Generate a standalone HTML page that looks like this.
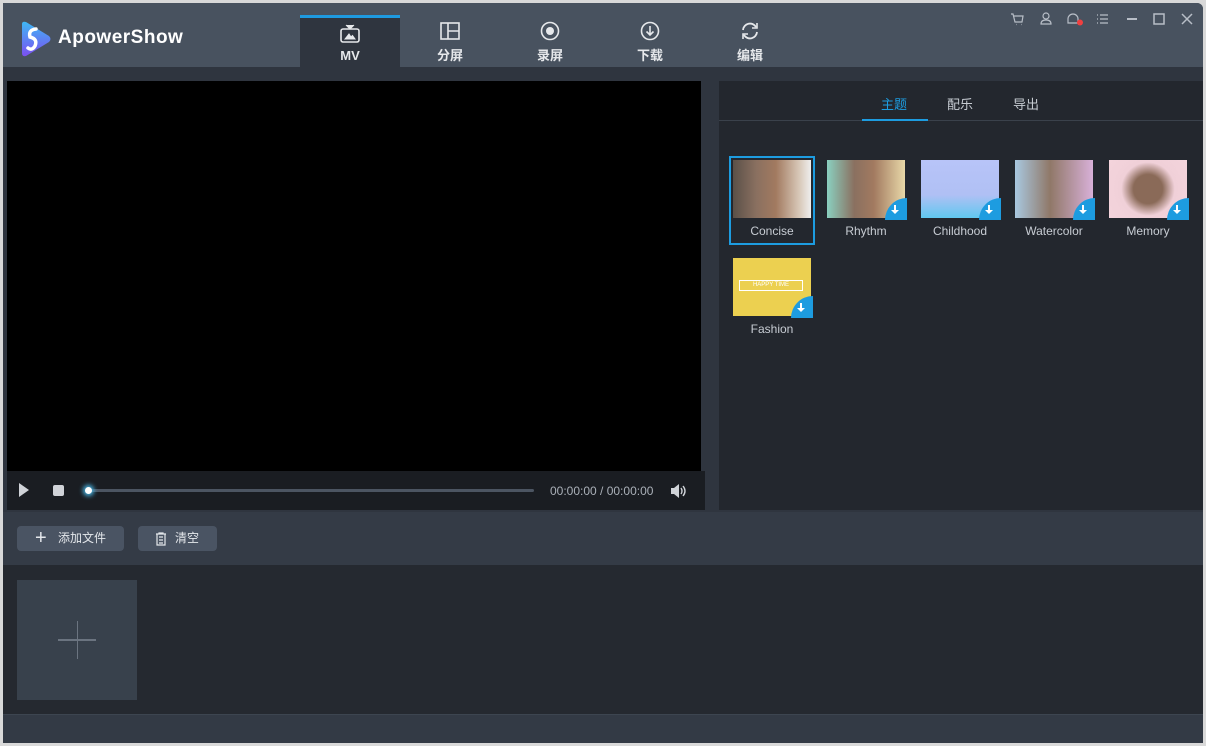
<!DOCTYPE html>
<html><head><meta charset="utf-8"><style>
*{margin:0;padding:0;box-sizing:border-box}
body{width:1206px;height:746px;background:#d9d9d9;font-family:"Liberation Sans","Noto Sans CJK SC",sans-serif;position:relative;overflow:hidden}
.a{position:absolute}
.win{left:3px;top:3px;width:1200px;height:740px;background:#2f353f;overflow:hidden;border-radius:0 6px 0 0}
.tab{position:absolute;top:12px;width:100px;height:52px;text-align:center;color:#e6e8eb;font-size:13px;font-weight:bold}
.tab svg{display:block;margin:6px auto 4px}
.th{position:absolute;width:78px;height:58px}
.lab{position:absolute;width:94px;text-align:center;color:#c7ccd3;font-size:12px}
.dl{position:absolute;right:-2px;bottom:-2px;width:22px;height:22px;background:#1d9ce0;border-radius:22px 0 0 0}
.dl:after{content:"";position:absolute;left:9px;top:7px;width:2px;height:6px;background:#fff}
.dl:before{content:"";position:absolute;left:6px;top:12px;border:4px solid transparent;border-top:4px solid #fff}
.btn{position:absolute;top:523px;height:25px;background:#4a5463;border-radius:4px;color:#e4e7eb;font-size:12px;line-height:25px}
</style></head><body>
<div class="a win">
 <div class="a" style="left:0;top:0;width:1200px;height:64px;background:#48525f"></div>
 <svg class="a" style="left:15px;top:18px" width="34" height="36" viewBox="0 0 34 36"><defs><linearGradient id="g" x1="0" y1="0" x2="0" y2="1"><stop offset="0" stop-color="#3fb8f5"/><stop offset="1" stop-color="#7b4ff0"/></linearGradient></defs><path d="M4 3 Q4 0 8 1 L31 15 Q34 18 31 21 L8 35 Q4 36 4 32Z" fill="url(#g)"/><path d="M18 8 Q10 9 12 16 Q20 18 17 25 Q14 30 10 27" stroke="#fff" stroke-width="3.5" fill="none" stroke-linecap="round"/></svg>
 <div class="a" style="left:55px;top:24px;color:#fff;font-size:19px;font-weight:bold;letter-spacing:0.5px">ApowerShow</div>
 <div class="tab" style="left:297px;background:#2f353f;border-top:3px solid #1e9ae0"><svg width="22" height="20" viewBox="0 0 22 20"><rect x="2" y="5" width="18" height="13" rx="2" fill="none" stroke="#e6e8eb" stroke-width="1.6"/><path d="M7 1l4 4 4-4M6 15l4-5 2 3 1.5-1.5L16 15z" stroke="#e6e8eb" fill="#e6e8eb" stroke-width="1"/></svg>MV</div>
 <div class="tab" style="left:397px"><svg width="22" height="20" viewBox="0 0 22 20"><rect x="2" y="2" width="18" height="16" fill="none" stroke="#e6e8eb" stroke-width="1.6"/><path d="M9 2v16M9 10h11" stroke="#e6e8eb" stroke-width="1.6"/></svg>分屏</div>
 <div class="tab" style="left:497px"><svg width="22" height="20" viewBox="0 0 22 20"><circle cx="11" cy="10" r="8.5" fill="none" stroke="#e6e8eb" stroke-width="1.6"/><circle cx="11" cy="10" r="4" fill="#e6e8eb"/></svg>录屏</div>
 <div class="tab" style="left:597px"><svg width="22" height="20" viewBox="0 0 22 20"><circle cx="11" cy="10" r="8.5" fill="none" stroke="#e6e8eb" stroke-width="1.6"/><path d="M11 5v9M7.5 10.5L11 14l3.5-3.5" stroke="#e6e8eb" stroke-width="1.6" fill="none"/></svg>下载</div>
 <div class="tab" style="left:697px"><svg width="22" height="20" viewBox="0 0 22 20"><path d="M4 9a7 7 0 0 1 13-3M18 11a7 7 0 0 1-13 3" stroke="#e6e8eb" stroke-width="1.8" fill="none"/><path d="M18 2v5h-5M4 18v-5h5" fill="none" stroke="#e6e8eb" stroke-width="1.6"/></svg>编辑</div>
 <svg class="a" style="left:1005px;top:8px" width="195" height="16" viewBox="0 0 195 16" fill="none" stroke="#b8bec7" stroke-width="1.2"><path d="M3 3h2l2 8h7l1-6H6M8 13.5h.5M13 13.5h.5"/><circle cx="38" cy="5" r="3"/><path d="M33 13q0-4 5-4t5 4z"/><path d="M60 12v-4a5 5 0 0 1 10 0v4z"/><circle cx="72" cy="11.5" r="3" fill="#f04040" stroke="none"/><path d="M89 4h1M89 8h1M89 12h1M92 4h8M92 8h8M92 12h8"/><path d="M119 8h10" stroke-width="2"/><rect x="146" y="3" width="10" height="10" stroke-width="1.5"/><path d="M174 3l10 10M184 3l-10 10" stroke-width="1.5"/></svg>

 <div class="a" style="left:4px;top:78px;width:694px;height:390px;background:#000"></div>
 <div class="a" style="left:4px;top:468px;width:698px;height:39px;background:#1a1d22"></div>
 <div class="a" style="left:16px;top:480px;border-left:10px solid #d0d3d8;border-top:7px solid transparent;border-bottom:7px solid transparent"></div>
 <div class="a" style="left:50px;top:482px;width:11px;height:11px;background:#d0d3d8;border-radius:2px"></div>
 <div class="a" style="left:86px;top:486px;width:445px;height:3px;background:#4c5562;border-radius:2px"></div>
 <div class="a" style="left:82px;top:484px;width:7px;height:7px;background:#fff;border-radius:50%;box-shadow:0 0 5px 2px #4ab8e8"></div>
 <div class="a" style="left:547px;top:481px;color:#aab0b8;font-size:12px">00:00:00 / 00:00:00</div>
 <svg class="a" style="left:667px;top:480px" width="18" height="16" viewBox="0 0 18 16"><path d="M1 5h3l5-4v14l-5-4H1z" fill="#d0d3d8"/><path d="M11 5q2 3 0 6M13 3q4 5 0 10" stroke="#d0d3d8" stroke-width="1.4" fill="none"/></svg>

 <div class="a" style="left:716px;top:78px;width:484px;height:429px;background:#23272e"></div>
 <div class="a" style="left:716px;top:117px;width:484px;height:1px;background:#3a414b"></div>
 <div class="a" style="left:859px;top:116px;width:66px;height:2px;background:#1d9ce0"></div>
 <div class="a" style="left:878px;top:91px;color:#1d9ce0;font-size:13px">主题</div>
 <div class="a" style="left:944px;top:91px;color:#c7ccd3;font-size:13px">配乐</div>
 <div class="a" style="left:1010px;top:91px;color:#c7ccd3;font-size:13px">导出</div>

 <div class="a" style="left:726px;top:153px;width:86px;height:89px;border:2px solid #1d9ce0"></div>
 <div class="th" style="left:730px;top:157px;background:linear-gradient(90deg,#5a5048,#8a7060 30%,#a27a60 55%,#d8c8b8 85%,#eee)"></div>
 <div class="th" style="left:824px;top:157px;background:linear-gradient(90deg,#8ad0c0,#8a7060 35%,#a27a60 60%,#e8d8a8)"><div class="dl"></div></div>
 <div class="th" style="left:918px;top:157px;background:linear-gradient(180deg,#b8c4f8,#b0c0f4 60%,#60c8f0)"><div class="dl"></div></div>
 <div class="th" style="left:1012px;top:157px;background:linear-gradient(90deg,#a8c8e0,#907868 45%,#d8b0d8)"><div class="dl"></div></div>
 <div class="th" style="left:1106px;top:157px;background:radial-gradient(circle at 50% 50%,#8a6a58 30%,#f0d0d8 55%,#f4d4dc)"><div class="dl"></div></div>
 <div class="th" style="left:730px;top:255px;background:#ecd050"><div class="a" style="left:6px;top:22px;width:64px;height:11px;border:1px solid #fff;color:#fff;font-size:6px;text-align:center;line-height:9px">HAPPY TIME</div><div class="dl"></div></div>
 <div class="lab" style="left:722px;top:221px">Concise</div>
 <div class="lab" style="left:816px;top:221px">Rhythm</div>
 <div class="lab" style="left:910px;top:221px">Childhood</div>
 <div class="lab" style="left:1004px;top:221px">Watercolor</div>
 <div class="lab" style="left:1098px;top:221px">Memory</div>
 <div class="lab" style="left:722px;top:319px">Fashion</div>

 <div class="a" style="left:0;top:509px;width:1200px;height:53px;background:#343b46"></div>
 <div class="btn" style="left:14px;width:107px;top:523px"><span style="position:absolute;left:18px;top:0;font-size:20px;font-weight:300">+</span><span style="position:absolute;left:41px">添加文件</span></div>
 <div class="btn" style="left:135px;width:79px;top:523px"><svg class="a" style="left:17px;top:6px" width="12" height="14" viewBox="0 0 12 14" fill="none" stroke="#e4e7eb" stroke-width="1.2"><path d="M1 2h10M4 2V1h4v1M2 2v11h8V2M4 5h4M4 8h4M4 11h4"/></svg><span style="position:absolute;left:37px">清空</span></div>
 <div class="a" style="left:0;top:562px;width:1200px;height:149px;background:#252930"></div>
 <div class="a" style="left:14px;top:577px;width:120px;height:120px;background:#38414c"></div>
 <div class="a" style="left:55px;top:636px;width:38px;height:1.5px;background:#6b7480"></div>
 <div class="a" style="left:73.5px;top:618px;width:1.5px;height:38px;background:#6b7480"></div>
 <div class="a" style="left:0;top:711px;width:1200px;height:29px;background:#333a45;border-top:1px solid #3d4550"></div>
</div>
</body></html>
